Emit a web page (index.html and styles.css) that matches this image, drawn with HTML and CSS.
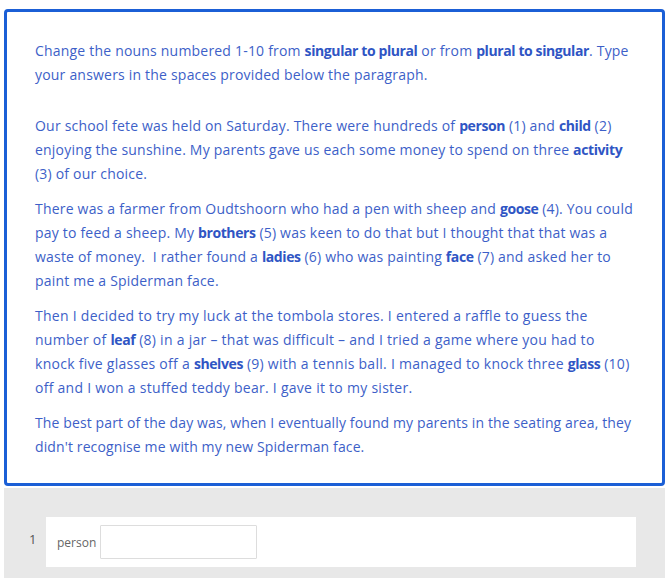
FILE: index.html
```html
<!DOCTYPE html>
<html lang="en">
<head>
    <meta charset="UTF-8">
    <meta name="viewport" content="width=device-width, initial-scale=1.0">
    <title>Singular and plural</title>
    <link rel="stylesheet" href="styles.css">
</head>
<body>
    <div class="passage">
        <p class="intro">Change the nouns numbered 1-10 from <b>singular to plural</b> or from <b>plural to singular</b>. Type your answers in the spaces provided below the paragraph.</p>
        <p>Our school fete was held on Saturday. There were hundreds of <b>person</b> (1) and <b>child</b> (2) enjoying the sunshine. My parents gave us each some money to spend on three <b>activity</b> (3) of our choice.</p>
        <p>There was a farmer from Oudtshoorn who had a pen with sheep and <b>goose</b> (4). You could pay to feed a sheep. My <b>brothers</b> (5) was keen to do that but I thought that that was a waste of money.&nbsp; I rather found a <b>ladies</b> (6) who was painting <b>face</b> (7) and asked her to paint me a Spiderman face.</p>
        <p class="wide">Then I decided to try my luck at the tombola stores. I entered a raffle to guess the number of <b>leaf</b> (8) in a jar &ndash; that was difficult &ndash; and I tried a game where you had to knock five glasses off a <b>shelves</b> (9) with a tennis ball. I managed to knock three <b>glass</b> (10) off and I won a stuffed teddy bear. I gave it to my sister.</p>
        <p class="last">The best part of the day was, when I eventually found my parents in the seating area, they didn't recognise me with my new Spiderman face.</p>
    </div>
    <div class="answers">
        <div class="answer-row">
            <span class="num">1</span>
            <div class="answer-card">
                <label for="a1">person</label>
                <input type="text" id="a1" name="a1">
            </div>
        </div>
    </div>
</body>
</html>
```
FILE: styles.css
```css
body {
    margin: 0;
    padding: 9px 7px 0 4px;
    background-color: #FFFFFF;
    font-family: "Open Sans", Arial, sans-serif;
    overflow: hidden;
}
.passage {
    border: 3px solid #1B5FD6; /* 外框藍色 */
    border-radius: 4px;
    padding: 16px 29px 13px 28px;
    color: #3D5FC8;
    font-size: 14px;
    line-height: 24px;
    letter-spacing: 0.2px;
}
.passage p {
    margin: 11px 0;
}
.passage p.intro {
    margin-bottom: 27px;
}
.passage p.wide {
    letter-spacing: 0.27px;
}
.passage p.last {
    letter-spacing: 0.12px;
}
.passage b {
    font-weight: 700;
    color: #2F55C4;
    letter-spacing: -0.4px;
}
.answers {
    background-color: #E8E8E8;
    margin-top: 2px;
    padding: 29px 29px 20px 25px;
    height: 100px;
}
.answer-row {
    display: flex;
    align-items: flex-start;
}
.num {
    width: 17px;
    padding-top: 13px;
    font-size: 13px;
    color: #555555;
}
.answer-card {
    flex: 1;
    background-color: #FFFFFF;
    display: flex;
    align-items: center;
    padding: 8px 6px 8px 11px;
    gap: 4px;
}
.answer-card label {
    font-size: 12px;
    color: #666666;
}
.answer-card input {
    width: 157px;
    height: 34px;
    box-sizing: border-box;
    border: 1px solid #DDDDDD;
    border-radius: 1px;
    padding: 0 6px;
}
```
